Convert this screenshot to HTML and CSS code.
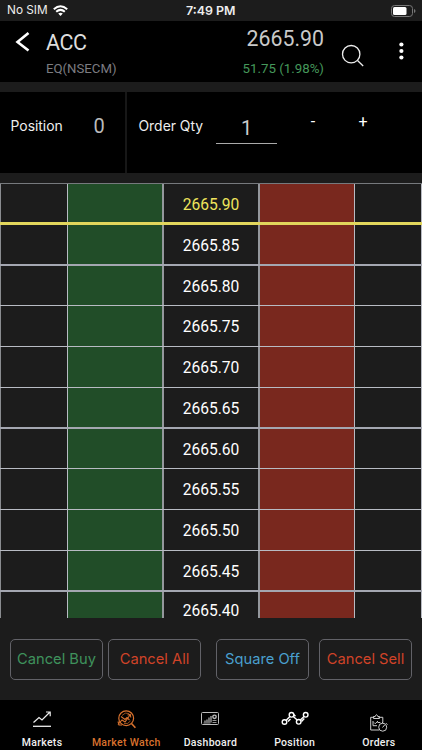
FILE: index.html
```html
<!DOCTYPE html>
<html lang="en">
<head>
<meta charset="utf-8">
<meta name="viewport" content="width=device-width, initial-scale=1">
<title>ACC</title>
<link rel="stylesheet" href="styles.css">
</head>
<body>
<div class="status">
  <span class="carrier">No SIM
    <svg class="wifi" width="15" height="11" viewBox="0 0 15 11"><g fill="none" stroke="#fff" stroke-width="2"><path d="M.8 4.3Q7.5-1.7 14.2 4.3"/><path d="M3.2 6.8Q7.500 3 11.800 6.800"/></g><path d="M5.200 8.600Q7.500 6.800 9.800 8.600L7.500 11Z" fill="#fff"/></svg>
  </span>
  <span class="clock">7:49 PM</span>
  <svg class="battery" width="25" height="12" viewBox="0 0 25 12"><rect x=".5" y=".5" width="21" height="11" rx="3" fill="none" stroke="#777"/><rect x="2" y="2" width="13.500" height="8" rx="1.500" fill="#fff"/><path d="M23 4v4q1.500-.5 1.500-2T23 4Z" fill="#777"/></svg>
</div>
<header class="header">
  <svg class="back" width="16" height="22" viewBox="0 0 16 22"><path d="M13.500 2 2.500 11l11 8.500" fill="none" stroke="#fff" stroke-width="2.600"/></svg>
  <div class="symbol"><div class="name">ACC</div><div class="segment">EQ(NSECM)</div></div>
  <div class="quote"><div class="price">2665.90</div><div class="change">51.75 (1.98%)</div></div>
  <svg class="search" width="24" height="24" viewBox="0 0 24 24" fill="none" stroke="#eee" stroke-width="1.300"><circle cx="10.200" cy="10.200" r="8.700"/><path d="m16.500 16.500 5.700 5.500"/></svg>
  <svg class="more" width="6" height="20" viewBox="0 0 6 20" fill="#fff"><circle cx="3.400" cy="3.500" r="2.100"/><circle cx="3.400" cy="10" r="2.100"/><circle cx="3.400" cy="16.500" r="2.100"/></svg>
</header>
<section class="controls">
  <div class="position"><span class="label">Position</span><span class="count">0</span></div>
  <div class="order"><span class="label">Order Qty</span><span class="qty">1</span><span class="step minus">-</span><span class="step plus">+</span></div>
</section>
<main class="ladder">
  <div class="row current"><i></i><i class="buy"></i><b>2665.90</b><i class="sell"></i><i></i></div>
  <div class="row"><i></i><i class="buy"></i><b>2665.85</b><i class="sell"></i><i></i></div>
  <div class="row"><i></i><i class="buy"></i><b>2665.80</b><i class="sell"></i><i></i></div>
  <div class="row"><i></i><i class="buy"></i><b>2665.75</b><i class="sell"></i><i></i></div>
  <div class="row"><i></i><i class="buy"></i><b>2665.70</b><i class="sell"></i><i></i></div>
  <div class="row"><i></i><i class="buy"></i><b>2665.65</b><i class="sell"></i><i></i></div>
  <div class="row"><i></i><i class="buy"></i><b>2665.60</b><i class="sell"></i><i></i></div>
  <div class="row"><i></i><i class="buy"></i><b>2665.55</b><i class="sell"></i><i></i></div>
  <div class="row"><i></i><i class="buy"></i><b>2665.50</b><i class="sell"></i><i></i></div>
  <div class="row"><i></i><i class="buy"></i><b>2665.45</b><i class="sell"></i><i></i></div>
  <div class="row last"><i></i><i class="buy"></i><b>2665.40</b><i class="sell"></i><i></i></div>
</main>
<div class="actions">
  <button class="green">Cancel Buy</button><button class="red">Cancel All</button><button class="blue">Square Off</button><button class="red">Cancel Sell</button>
</div>
<nav class="tabs">
  <a class="markets"><svg width="20" height="20" viewBox="0 0 20 20" fill="none" stroke="#eee" stroke-width="1.200"><path d="M1 17.300h18" stroke-width="1.300"/><path d="m1.500 13.500 5.500-5 3 2.500 7.500-7.500M14 3h4.200v4.200" /></svg><span>Markets</span></a>
  <a class="watch"><svg width="20" height="20" viewBox="0 0 20 20" fill="none" stroke="#d9722e" stroke-width="1.200"><circle cx="10.200" cy="9.200" r="7.400"/><path d="m15.500 14.500 3.900 4.200" stroke-width="1.600"/><path d="m2 15.500 4-4.500 3 2 5-7M11.500 6 14.300 5.500l.5 3M5 7.500l4 3 2-2 2.500 2.500M2 12.500l1 3.500h3" stroke-width="1.100"/><path d="M6 6.500Q9 2.800 13 4.500M8 14.500q4 1 6.500-2.500" stroke-width=".7"/></svg><span>Market Watch</span></a>
  <a class="dashboard"><svg width="20" height="20" viewBox="0 0 20 20" fill="none" stroke="#bbb"><rect x="1.500" y="3.500" width="17" height="12" rx="1"/><path d="M5 13.500v-2M7 13.500v-3M9 13.500V8.500M11 13.500V7" stroke-width="1.200"/><circle cx="14.500" cy="7.800" r="1.700" stroke-width="1.400"/><path d="M12.500 11.500h4M12.500 13.500h4M3.500 14h7" stroke-width=".8"/></svg><span>Dashboard</span></a>
  <a class="pos"><svg width="28" height="20" viewBox="0 0 28 20" fill="none" stroke="#fff" stroke-width="1.400"><circle cx="3.500" cy="13" r="2.300"/><circle cx="10.500" cy="5.800" r="2.300"/><circle cx="17.700" cy="12.800" r="2.300"/><circle cx="24.700" cy="5.800" r="2.300"/><path d="m5.200 11.200 3.700-3.700M12.200 7.500l4 3.600M19.400 11 23 7.500M7 12.500l2.500-2.500M20.500 12.500l2.800-3M12.700 5.500l1.800 1.800"/></svg><span>Position</span></a>
  <a class="orders"><svg width="20" height="20" viewBox="0 0 20 20" fill="none" stroke="#ccc" stroke-width="1"><path d="M10 17H1.700V4.300h3.500M9.500 4.300h4.300v5.200M4.500 5.500v-2h1.700Q7.500-.2 8.800 3.500h1.700v2ZM4 12.700h4M4 8v4.700M5 9.500l1.200 1.200L9 8M8.500 9.500h2.800"/><circle cx="13.700" cy="14.200" r="4"/><path d="m13.500 14.500 2.300-2.700M13.500 9v1.200M17.300 10.300l1.200 1.200"/></svg><span>Orders</span></a>
</nav>
</body>
</html>
```
FILE: styles.css
```css
* { box-sizing: border-box; }
body { margin: 0; width: 422px; height: 750px; overflow: hidden; background: #1c1c1c; color: #fff; font-family: Roboto, sans-serif; }
svg { display: block; flex: none; }
.status { height: 21px; display: grid; grid-template-columns: 186px 1fr 31px; align-items: center; font: 11.8px/21px Inter, sans-serif; color: #eee; }
.carrier { display: flex; gap: 5.5px; padding-left: 7px; }
.wifi { margin-top: 5px; }
.clock { font-size: 12.4px; font-weight: 600; }
.header { height: 61px; display: flex; background: #000; }
.back { margin: 10px 0 0 15px; }
.symbol { width: 169.5px; margin-left: 15px; }
.name { margin-top: 5px; font-size: 21.5px; line-height: 34px; letter-spacing: -.5px; color: #ddd; }
.segment { font-size: 13.2px; line-height: 18px; color: #7c7c80; }
.quote { width: 108.5px; text-align: right; }
.price { margin-top: 1px; font-size: 21.3px; line-height: 34px; color: #c9c9c9; }
.change { margin-top: 4px; font-size: 13.3px; line-height: 18px; color: #45985b; }
.search { margin: 23px 0 0 17px; }
.more { margin: 20px 0 0 33px; }
.controls { height: 81px; margin-top: 10px; display: flex; background: #000; }
.position, .order { display: flex; align-items: flex-start; }
.position { width: 127px; padding-left: 10.5px; border-right: 2px solid #171717; }
.label { margin-top: 24px; font: 13.9px/20px Inter, sans-serif; color: #eee; white-space: nowrap; }
.position .label { width: 83px; }
.count { margin-top: 20px; font-size: 20px; line-height: 28px; color: #bbb; }
.order { padding-left: 11.5px; }
.order .label { width: 77.5px; }
.qty { width: 61px; height: 34px; margin-top: 18px; padding-top: 5px; border-bottom: 1px solid #aaa; font-size: 20px; line-height: 27px; text-align: center; color: #ccc; }
.step { width: 20px; margin-top: 20px; text-align: center; font-size: 16px; line-height: 20px; }
.minus { margin-left: 26px; }
.plus { margin-left: 30px; }
.ladder { height: 436px; margin-top: 10px; overflow: hidden; border-top: 1px solid #76797d; }
.row { height: 41px; display: grid; grid-template: 100% / 68px 96px 96px 95px 67px; border-bottom: 1px solid #b8bbc3; }
.row:nth-child(4n+2) { border-bottom: 2px solid #a4a7b1; }
.row:nth-child(4n+3) { height: 40px; }
.row i, .row b { border-right: 1px solid #b8bbc3; }
.row i:nth-child(2), .row b { border-right: 2px solid #94979c; }
.row i:first-child { border-left: 1px solid #8a8c90; }
.row b { padding-top: 10px; font-size: 15.6px; font-weight: 400; line-height: 22px; letter-spacing: -.05px; text-align: center; }
.buy { background: #214d28; }
.sell { background: #79281e; }
.row.current { border-bottom: 3px solid #e2d65c; }
.current b { color: #efe45c; }
.row.last { height: 26px; border-bottom: 0; }
.last b { padding-top: 9px; line-height: 20px; }
.actions { height: 81px; padding: 20px 10px 0; display: flex; }
.actions button { width: 93px; height: 41px; padding: 0; border: 1px solid #626268; border-radius: 5px; background: none; font: 14.7px/39px Inter, sans-serif; white-space: nowrap; }
.actions button + button { margin-left: 5px; }
.actions .blue { margin-left: 15px; color: #4aa0cf; }
.actions button:last-child { margin-left: 10px; }
.green { color: #3f925c; }
.red { color: #d04328; }
.tabs { height: 50px; display: grid; grid-template-columns: repeat(5, 84.2px); background: #000; }
.tabs a { display: flex; flex-direction: column; align-items: center; padding-top: 9px; font-size: 10.5px; line-height: 13px; font-weight: 500; letter-spacing: .3px; color: #f0f0f0; white-space: nowrap; }
.tabs span { margin-top: 7px; }
.tabs .watch { color: #d9722e; }
.tabs .orders svg { margin: 4px 0 -4px; }
```
